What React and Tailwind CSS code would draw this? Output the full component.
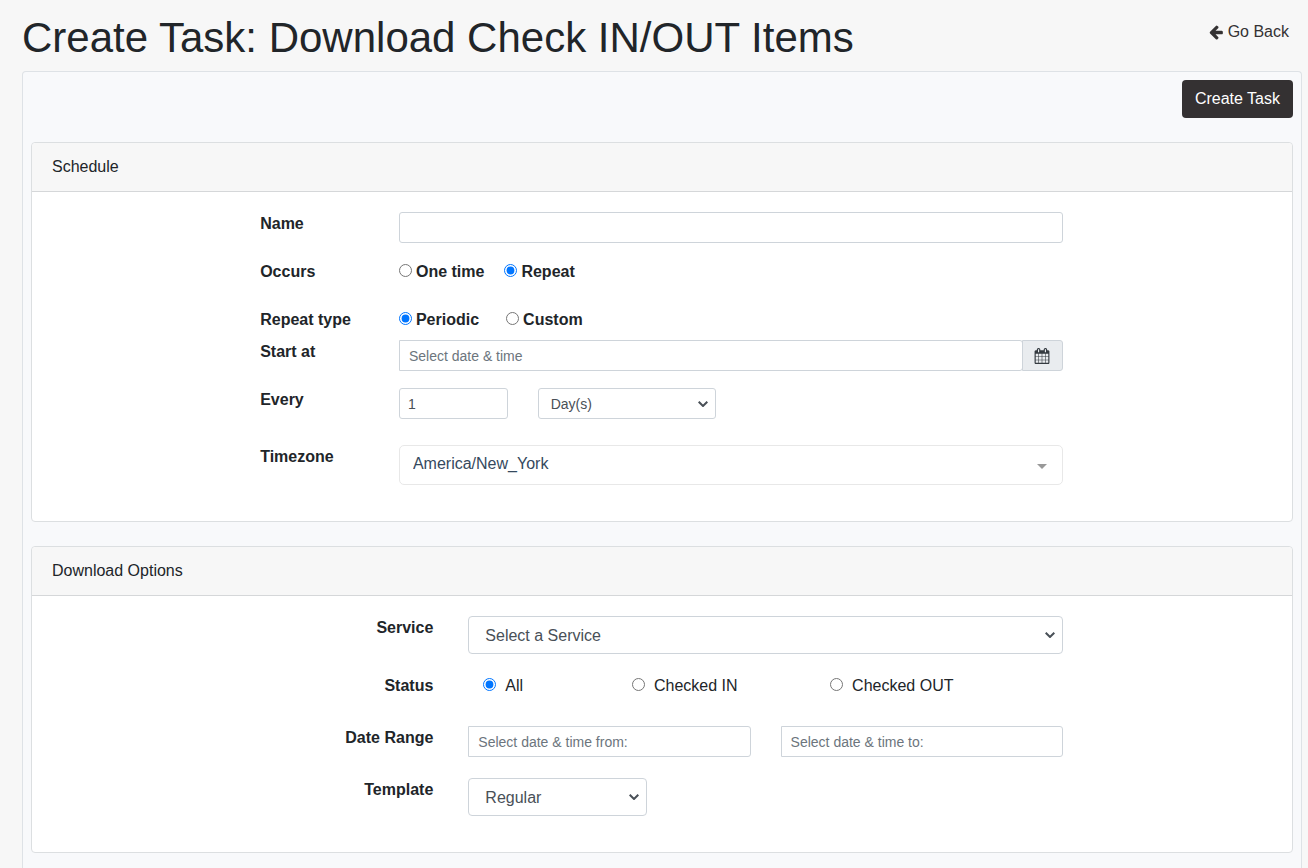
import React, { useState } from 'react';

const inputBase = 'block w-full border border-[#ced4da] bg-white text-[#495057] placeholder:text-[#6c757d]';
const inputSm = `${inputBase} h-[31px] px-2 text-sm`;
const selectSm = `${inputBase} h-[31px] appearance-none rounded-[3px] px-3 text-sm`;
const selectMd = `${inputBase} h-[38px] appearance-none rounded px-4 pt-0.5 text-base`;

function ArrowLeftIcon() {
  return (
    <svg className="size-4" viewBox="0 0 1792 1792" fill="currentColor" aria-hidden="true">
      <path d="M1664 896v128q0 53-32.5 90.5t-84.5 37.5h-704l293 294q38 36 38 90t-38 90l-75 76q-37 37-90 37-52 0-91-37l-651-652q-37-37-37-90 0-52 37-91l651-650q38-38 91-38 52 0 90 38l75 74q38 38 38 91t-38 91l-293 293h704q52 0 84.5 37.5t32.5 90.5z" />
    </svg>
  );
}

function CalendarIcon() {
  return (
    <svg className="size-4" viewBox="0 0 1792 1792" fill="currentColor" aria-hidden="true">
      <path
        fillRule="evenodd"
        d="M192 1664h288v-288h-288zM544 1664h320v-288h-320zM928 1664h320v-288h-320zM1312 1664h288v-288h-288zM192 1312h288v-320h-288zM544 1312h320v-320h-320zM928 1312h320v-320h-320zM1312 1312h288v-320h-288zM192 928h288v-288h-288zM544 928h320v-288h-320zM928 928h320v-288h-320zM1312 928h288v-288h-288zM576 448v-288q0-13-9.5-22.5t-22.5-9.5h-64q-13 0-22.5 9.5t-9.5 22.5v288q0 13 9.5 22.5t22.5 9.5h64q13 0 22.5-9.5t9.5-22.5zM1344 448v-288q0-13-9.5-22.5t-22.5-9.5h-64q-13 0-22.5 9.5t-9.5 22.5v288q0 13 9.5 22.5t22.5 9.5h64q13 0 22.5-9.5t9.5-22.5zM1728 384v1280q0 52-38 90t-90 38h-1408q-52 0-90-38t-38-90v-1280q0-52 38-90t90-38h128v-96q0-66 47-113t113-47h64q66 0 113 47t47 113v96h384v-96q0-66 47-113t113-47h64q66 0 113 47t47 113v96h128q52 0 90 38t38 90z"
      />
    </svg>
  );
}

function Card({ title, children }) {
  return (
    <section className="rounded border border-[#dcdfe1] bg-white">
      <h2 className="rounded-t border-b border-[#d5d7d9] bg-[#f7f7f7] px-5 py-3 text-base">{title}</h2>
      <div className="pt-5 pr-[21px] pb-9 pl-5">
        <div className="mx-auto w-[calc(66.6667%-10px)]">{children}</div>
      </div>
    </section>
  );
}

function Row({ className = '', children }) {
  return <div className={`grid grid-cols-12 items-start gap-x-[30px] ${className}`}>{children}</div>;
}

function Select({ className = '', children, ...rest }) {
  return (
    <div className="relative">
      <select className={className} {...rest}>{children}</select>
      <svg
        className="pointer-events-none absolute inset-y-0 right-2 my-auto h-1.5 w-2.5 text-[#495057]"
        viewBox="0 0 10 6"
        fill="none"
        stroke="currentColor"
        strokeWidth="2"
        aria-hidden="true"
      >
        <path d="M.7.7 5 5 9.3.7" />
      </svg>
    </div>
  );
}

function Radio({ name, value, current, onChange, className = 'gap-1', children }) {
  return (
    <label className={`flex items-center ${className}`}>
      <input
        type="radio"
        className="mb-[3px] size-[13px] shrink-0"
        name={name}
        value={value}
        checked={current === value}
        onChange={() => onChange(value)}
      />
      <span>{children}</span>
    </label>
  );
}

export default function App() {
  const [occurs, setOccurs] = useState('repeat');
  const [repeatType, setRepeatType] = useState('periodic');
  const [status, setStatus] = useState('all');

  return (
    <div className="flex min-h-screen flex-col bg-[#f7f7f7] pr-1.5 pl-[22px] font-['Liberation_Sans',Arial,sans-serif] text-base text-[#212529]">
      <header className="flex items-start justify-between pt-[13px] pr-[13px] pb-2">
        <h1 className="text-[42px] leading-[50px]">Create Task: Download Check IN/OUT Items</h1>
        <a href="#back" className="mt-[7px] flex items-center gap-1 text-[#343233]">
          <ArrowLeftIcon />
          Go Back
        </a>
      </header>

      <form
        className="flex-1 rounded-t border border-b-0 border-[#dee2e6] bg-[#f8f9fb] px-2 pt-2"
        onSubmit={(e) => e.preventDefault()}
      >
        <div className="mb-6 flex justify-end">
          <button type="submit" className="h-[38px] rounded bg-[#343132] px-[13px] text-white">
            Create Task
          </button>
        </div>

        <Card title="Schedule">
          <Row className="mb-[17px]">
            <label htmlFor="name" className="col-span-2 font-bold">Name</label>
            <div className="col-span-10">
              <input id="name" type="text" className={`${inputSm} rounded-[3px]`} />
            </div>
          </Row>

          <Row className="mb-6">
            <span id="occurs-label" className="col-span-2 font-bold">Occurs</span>
            <div role="radiogroup" aria-labelledby="occurs-label" className="col-span-10 flex gap-5 font-bold">
              <Radio name="occurs" value="once" current={occurs} onChange={setOccurs}>One time</Radio>
              <Radio name="occurs" value="repeat" current={occurs} onChange={setOccurs}>Repeat</Radio>
            </div>
          </Row>

          <Row className="mb-2">
            <span id="repeat-label" className="col-span-2 font-bold">Repeat type</span>
            <div role="radiogroup" aria-labelledby="repeat-label" className="col-span-10 flex gap-[27px] font-bold">
              <Radio name="repeat" value="periodic" current={repeatType} onChange={setRepeatType}>Periodic</Radio>
              <Radio name="repeat" value="custom" current={repeatType} onChange={setRepeatType}>Custom</Radio>
            </div>
          </Row>

          <Row className="mb-[17px]">
            <label htmlFor="start" className="col-span-2 font-bold">Start at</label>
            <div className="col-span-10 flex">
              <input id="start" type="text" placeholder="Select date & time" className={`${inputSm} rounded-r-[3px] pl-[9px]`} />
              <button
                type="button"
                aria-label="Open calendar"
                className="-ml-px flex h-[31px] w-[41px] shrink-0 items-center justify-center rounded-r-[3px] border border-[#ced4da] bg-[#e9ecef] text-[#343a40]"
              >
                <CalendarIcon />
              </button>
            </div>
          </Row>

          <Row className="mb-[26px]">
            <label htmlFor="every" className="col-span-2 font-bold">Every</label>
            <div className="col-span-2">
              <input id="every" type="text" defaultValue="1" className={`${inputSm} rounded-[3px]`} />
            </div>
            <div className="col-span-3">
              <Select aria-label="Unit" className={selectSm}>
                <option>Day(s)</option>
                <option>Week(s)</option>
                <option>Month(s)</option>
              </Select>
            </div>
          </Row>

          <Row>
            <label htmlFor="timezone" className="col-span-2 font-bold">Timezone</label>
            <div className="relative col-span-10">
              <select
                id="timezone"
                className="block h-10 w-full appearance-none rounded-[5px] border border-[#e8e8e8] bg-white px-[13px] pb-0.5 text-base text-[#35495e]"
              >
                <option>America/New_York</option>
                <option>America/Chicago</option>
                <option>America/Los_Angeles</option>
              </select>
              <svg className="pointer-events-none absolute top-[19px] right-4 h-[5px] w-2.5" viewBox="0 0 10 5" fill="#999" aria-hidden="true">
                <path d="M0 0h10L5 5z" />
              </svg>
            </div>
          </Row>
        </Card>

        <div className="h-6" />

        <Card title="Download Options">
          <Row className="mb-5">
            <label htmlFor="service" className="col-span-3 pr-[5px] text-right font-bold">Service</label>
            <div className="col-span-9">
              <Select id="service" className={selectMd}>
                <option>Select a Service</option>
              </Select>
            </div>
          </Row>

          <Row className="mb-7">
            <span id="status-label" className="col-span-3 pr-[5px] text-right font-bold">Status</span>
            <div role="radiogroup" aria-labelledby="status-label" className="col-span-9 -mr-[15px] flex pl-[15px]">
              <Radio name="status" value="all" current={status} onChange={setStatus} className="w-1/4 gap-[9px]">All</Radio>
              <Radio name="status" value="in" current={status} onChange={setStatus} className="w-1/3 gap-[9px]">Checked IN</Radio>
              <Radio name="status" value="out" current={status} onChange={setStatus} className="w-1/3 gap-[9px]">Checked OUT</Radio>
            </div>
          </Row>

          <Row className="mb-[21px]">
            <label htmlFor="date-from" className="col-span-3 pr-[5px] text-right font-bold">Date Range</label>
            <div className="col-span-9 flex gap-[30px]">
              <input id="date-from" type="text" placeholder="Select date & time from:" className={`${inputSm} rounded-r-[3px] pl-[9px]`} />
              <input aria-label="Date to" type="text" placeholder="Select date & time to:" className={`${inputSm} rounded-r-[3px] pl-[9px]`} />
            </div>
          </Row>

          <Row>
            <label htmlFor="template" className="col-span-3 pr-[5px] text-right font-bold">Template</label>
            <div className="col-span-3">
              <Select id="template" className={selectMd}>
                <option>Regular</option>
              </Select>
            </div>
          </Row>
        </Card>
      </form>
    </div>
  );
}
